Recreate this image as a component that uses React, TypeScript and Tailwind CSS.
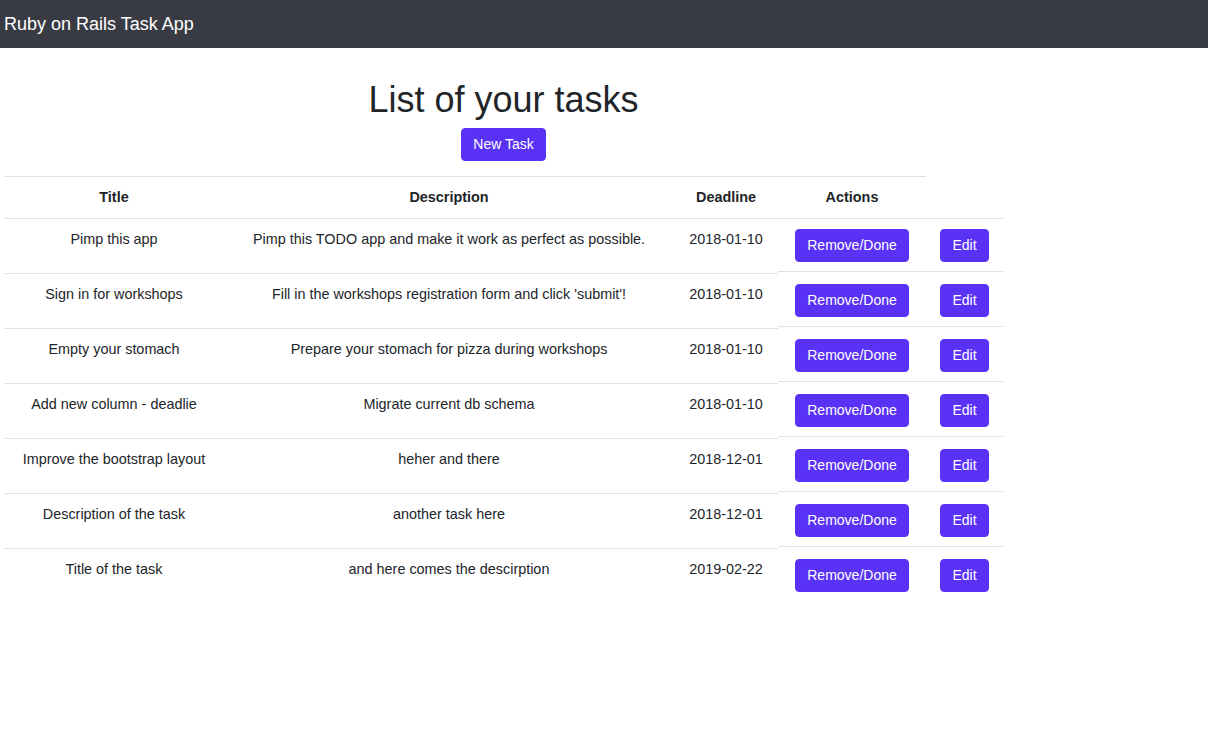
import React from 'react';

interface Task {
  id: number;
  title: string;
  description: string;
  deadline: string;
}

const tasks: Task[] = [
  { id: 1, title: 'Pimp this app', description: 'Pimp this TODO app and make it work as perfect as possible.', deadline: '2018-01-10' },
  { id: 2, title: 'Sign in for workshops', description: "Fill in the workshops registration form and click 'submit'!", deadline: '2018-01-10' },
  { id: 3, title: 'Empty your stomach', description: 'Prepare your stomach for pizza during workshops', deadline: '2018-01-10' },
  { id: 4, title: 'Add new column - deadlie', description: 'Migrate current db schema', deadline: '2018-01-10' },
  { id: 5, title: 'Improve the bootstrap layout', description: 'heher and there', deadline: '2018-12-01' },
  { id: 6, title: 'Description of the task', description: 'another task here', deadline: '2018-12-01' },
  { id: 7, title: 'Title of the task', description: 'and here comes the descirption', deadline: '2019-02-22' },
];

const btn =
  'inline-block h-[33px] rounded-[4px] border border-[#5a32f6] bg-[#5a32f6] px-[11.5px] text-[14px] leading-[31px] text-white';

// Action cells sit 2px higher than the rest of the row, like in the original page
const TaskRow: React.FC<{ task: Task; first: boolean }> = ({ task, first }) => {
  const actionCell = first
    ? 'h-[55px] border-t border-[#dee2e6] pt-[10px] text-center'
    : '-mt-[2px] h-[55px] border-t border-[#dee2e6] pt-[12px] text-center';

  return (
    <div className="flex items-start">
      <div className="h-[55px] w-[220px] border-t border-[#dee2e6] pt-[10px] text-center">{task.title}</div>
      <div className="h-[55px] w-[450px] border-t border-[#dee2e6] pt-[10px] text-center">{task.description}</div>
      <div className="h-[55px] w-[104px] border-t border-[#dee2e6] pt-[10px] text-center">{task.deadline}</div>
      <div className={`w-[148px] ${actionCell}`}>
        <button className={btn}>Remove/Done</button>
      </div>
      <div className={`w-[77px] ${actionCell}`}>
        <button className={btn}>Edit</button>
      </div>
    </div>
  );
};

export default function App() {
  return (
    <div className="min-h-screen bg-white font-['Liberation_Sans',Arial,sans-serif] text-[14.4px] leading-[21px] text-[#212529]">
      <nav className="flex h-[48px] items-center bg-[#393b44] px-[4px]">
        <span className="text-[18px] leading-[26px] text-white">Ruby on Rails Task App</span>
      </nav>

      <div className="ml-[4px] w-[999px]">
        <div className="text-center">
          <h1 className="mt-[30px] mb-[7px] text-[36px] leading-[43px] font-normal">List of your tasks</h1>
          <button className={btn}>New Task</button>
        </div>

        <div className="mt-[15px]">
          <div className="flex font-bold">
            <div className="w-[220px] border-t border-[#dee2e6] pt-[10px] pb-[10px] text-center">Title</div>
            <div className="w-[450px] border-t border-[#dee2e6] pt-[10px] pb-[10px] text-center">Description</div>
            <div className="w-[104px] border-t border-[#dee2e6] pt-[10px] pb-[10px] text-center">Deadline</div>
            <div className="w-[148px] border-t border-[#dee2e6] pt-[10px] pb-[10px] text-center">Actions</div>
            <div className="w-[77px]"></div>
          </div>
          {tasks.map((task, i) => (
            <TaskRow key={task.id} task={task} first={i === 0} />
          ))}
        </div>
      </div>
    </div>
  );
}
